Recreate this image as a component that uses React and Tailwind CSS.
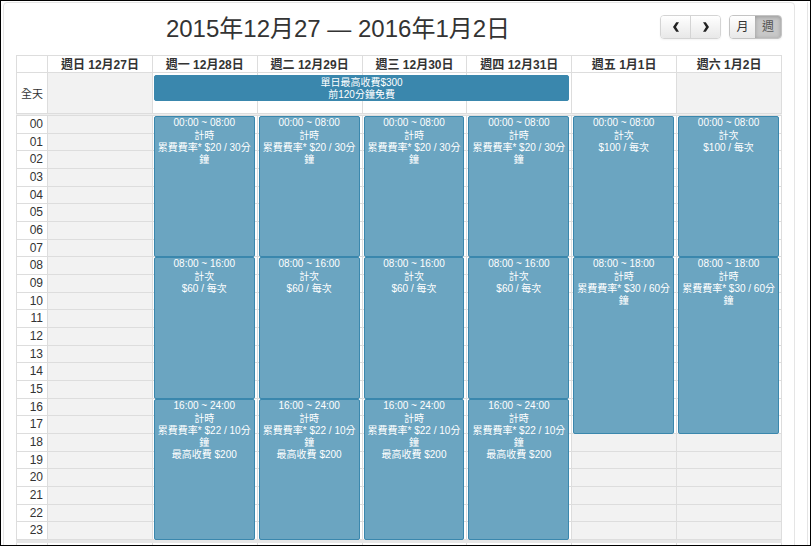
const DAYS = ["週日 12月27日", "週一 12月28日", "週二 12月29日", "週三 12月30日", "週四 12月31日", "週五 1月1日", "週六 1月2日"];

const HOURS = Array.from({ length: 24 }, (_, i) => String(i).padStart(2, "0"));

const WEEKDAY = [
  { start: 0, end: 8, time: "00:00 ~ 08:00", lines: ["計時", "累費費率* $20 / 30分鐘"] },
  { start: 8, end: 16, time: "08:00 ~ 16:00", lines: ["計次", "$60 / 每次"] },
  { start: 16, end: 24, time: "16:00 ~ 24:00", lines: ["計時", "累費費率* $22 / 10分鐘", "最高收費 $200"] },
];

const HOLIDAY = [
  { start: 0, end: 8, time: "00:00 ~ 08:00", lines: ["計次", "$100 / 每次"] },
  { start: 8, end: 18, time: "08:00 ~ 18:00", lines: ["計時", "累費費率* $30 / 60分鐘"] },
];

const SCHEDULE = [[], WEEKDAY, WEEKDAY, WEEKDAY, WEEKDAY, HOLIDAY, HOLIDAY];

const isCovered = (day, hour) => SCHEDULE[day].some((event) => hour >= event.start && hour < event.end);

const ROW = "grid grid-cols-[31px_repeat(7,minmax(0,1fr))]";
const BUTTON = "flex h-full items-center justify-center bg-linear-to-b from-white to-[#e8e8e8] text-xs text-[#333]";

function Chevron({ flip }) {
  return (
    <svg viewBox="0 0 8 12" className="h-3 w-2" aria-hidden="true">
      <path
        d={flip ? "M1 1.2 H3.8 L7 6 L3.8 10.8 H1 L4 6 Z" : "M7 1.2 H4.2 L1 6 L4.2 10.8 H7 L4 6 Z"}
        fill="#222"
      />
    </svg>
  );
}

function Toolbar() {
  return (
    <header className="grid grid-cols-[1fr_auto] items-start">
      <h1 className="px-4 text-center text-2xl leading-9 text-[#333]">2015年12月27 — 2016年1月2日</h1>
      <div className="flex gap-2 pt-1">
        <div className="flex h-6 overflow-hidden rounded border border-[#d4d4d4] shadow-xs">
          <button type="button" aria-label="上一週" className={`${BUTTON} w-[30px] border-r border-[#d4d4d4]`}>
            <Chevron />
          </button>
          <button type="button" aria-label="下一週" className={`${BUTTON} w-[29px]`}>
            <Chevron flip />
          </button>
        </div>
        <div className="flex h-6 overflow-hidden rounded border border-[#c4c4c4] shadow-xs">
          <button type="button" className={`${BUTTON} w-[25px]`}>月</button>
          <button
            type="button"
            aria-pressed="true"
            className="flex h-full w-[26px] items-center justify-center bg-[#c8c8c8] text-xs text-[#555] shadow-[inset_0_1px_4px_rgba(0,0,0,0.25)]"
          >
            週
          </button>
        </div>
      </div>
    </header>
  );
}

function Event({ event }) {
  return (
    <article
      className="overflow-hidden rounded-xs border border-[#3a87ad] bg-[#6ba5c1] text-center text-[10px] leading-3 text-white"
      style={{ gridRow: `${event.start + 1} / ${event.end + 1}` }}
    >
      <time className="block">{event.time}</time>
      <div className="pt-px">
        {event.lines.map((line) => (
          <p key={line}>{line}</p>
        ))}
      </div>
    </article>
  );
}

function AllDay() {
  return (
    <div className="relative">
      <table className="block">
        <thead className="block">
          <tr className={`${ROW} border-t border-l border-[#ddd]`}>
            <td className="border-r border-b border-[#ddd]" />
            {DAYS.map((day) => (
              <th key={day} scope="col" className="h-[17px] border-r border-b border-[#ddd] text-xs leading-[18px] font-bold whitespace-nowrap">
                {day}
              </th>
            ))}
          </tr>
        </thead>
        <tbody className="block">
          <tr className={`${ROW} border-l border-[#ddd]`}>
            <th scope="row" className="h-10 border-r border-[#ddd] pr-1 text-right text-[11px] leading-[42px] font-normal">全天</th>
            {DAYS.map((day, i) => (
              <td key={day} className={`border-r border-[#ddd] ${i % 6 === 0 ? "bg-[#f2f2f2]" : ""}`} />
            ))}
          </tr>
        </tbody>
      </table>
      <div className={`${ROW} absolute inset-x-0 top-5 pl-px`}>
        <article className="col-start-3 col-end-7 mr-[3px] ml-px h-[26px] rounded-xs border border-[#3a87ad] bg-[#3a87ad] pt-px text-center text-[10px] leading-3 text-white">
          <p>單日最高收費$300</p>
          <p>前120分鐘免費</p>
        </article>
      </div>
    </div>
  );
}

function Hours() {
  return (
    <div className="relative">
      <table className="block">
        <tbody className="grid h-[424px] auto-rows-fr">
          {HOURS.map((hour, h) => (
            <tr key={hour} className={`${ROW} border-b border-l border-[#ddd]`}>
              <th scope="row" className="border-r border-[#ddd] pr-1 text-right text-xs leading-4 font-normal">{hour}</th>
              {DAYS.map((day, d) => (
                <td key={day} className={`border-r border-[#ddd] ${isCovered(d, h) ? "bg-white" : "bg-[#f2f2f2]"}`} />
              ))}
            </tr>
          ))}
        </tbody>
      </table>
      <div className={`${ROW} absolute inset-0 pl-px`}>
        <div />
        {SCHEDULE.map((events, i) => (
          <div key={DAYS[i]} className="mr-[3px] ml-px grid grid-rows-[repeat(24,minmax(0,1fr))]">
            {events.map((event) => (
              <Event key={event.start} event={event} />
            ))}
          </div>
        ))}
      </div>
    </div>
  );
}

export default function App() {
  return (
    <div className="h-screen overflow-hidden border border-black bg-white pt-px pr-[2px] pl-[2px] font-['Liberation_Sans','Noto_Sans_CJK_TC',sans-serif] text-[#333]">
      <div className="border-r border-[#e5e5e5] pr-3">
        <main className="rounded-t border border-[#e5e5e5] px-3 pt-2 pb-8">
          <Toolbar />
          <div className="pt-2">
            <AllDay />
            <div className="h-[3px] border-y border-[#ddd] bg-[#eee]" />
            <Hours />
            <div className="h-[3px] bg-[#e6e6e6]" />
            <div className={`${ROW} h-5 border-l border-[#ddd]`}>
              <span className="border-r border-[#ddd]" />
              {DAYS.map((day) => (
                <span key={day} className="border-r border-[#ddd]" />
              ))}
            </div>
          </div>
        </main>
      </div>
    </div>
  );
}
